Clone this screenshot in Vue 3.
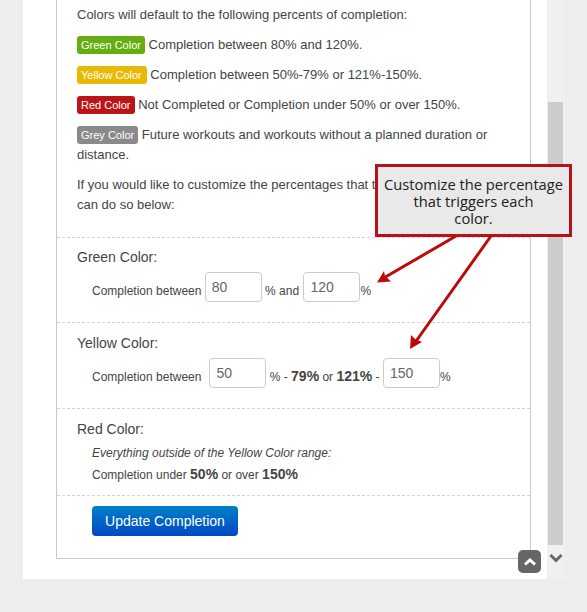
<template>
  <div class="page">
    <div class="panel">
      <div class="card">
        <div class="intro">
          <p>Colors will default to the following percents of completion:</p>
          <p v-for="item in legend" :key="item.label">
            <span class="badge" :class="item.cls">{{ item.label }}</span> {{ item.text }}
          </p>
          <p>If you would like to customize the percentages that trigger each color, you can do so below:</p>
        </div>

        <div class="section green">
          <h4>Green Color:</h4>
          <div class="fields">
            Completion between
            <input class="num" type="text" value="80">
            % and
            <input class="num second" type="text" value="120">%
          </div>
        </div>

        <div class="section yellow">
          <h4>Yellow Color:</h4>
          <div class="fields">
            <span class="lead">Completion between</span>
            <input class="num" type="text" value="50">
            % - <b>79%</b> or <b>121%</b> -
            <input class="num" type="text" value="150">%
          </div>
        </div>

        <div class="section red">
          <h4>Red Color:</h4>
          <div class="note">Everything outside of the Yellow Color range:</div>
          <div class="under">Completion under <b>50%</b> or over <b>150%</b></div>
        </div>

        <div class="actions">
          <button class="update" type="button">Update Completion</button>
        </div>
      </div>
    </div>

    <div class="scrollbar">
      <div class="thumb"></div>
      <svg class="down" width="14" height="10" viewBox="0 0 14 10">
        <path d="M1.5 2 L7 7.5 L12.5 2" fill="none" stroke="#666" stroke-width="3" />
      </svg>
    </div>

    <div class="to-top">
      <svg width="12" height="8" viewBox="0 0 12 8">
        <path d="M1 6.5 L6 2 L11 6.5" fill="none" stroke="#fff" stroke-width="3" />
      </svg>
    </div>

    <div class="callout">Customize the percentage<br>that triggers each<br>color.</div>

    <svg class="arrows" width="587" height="612" viewBox="0 0 587 612">
      <g fill="none" stroke="#bb0a0a" stroke-width="3">
        <path d="M456 236 L382 279" />
        <path d="M491 236 L414 344" />
      </g>
      <path d="M377 282.5 L384 271 L385 276 L391 281.5 Z" fill="#bb0a0a" />
      <path d="M410 349 L411 335 L415 339 L422 342 Z" fill="#bb0a0a" />
    </svg>
  </div>
</template>

<script setup>
const legend = [
  { label: 'Green Color', cls: 'b-green', text: 'Completion between 80% and 120%.' },
  { label: 'Yellow Color', cls: 'b-yellow', text: 'Completion between 50%-79% or 121%-150%.' },
  { label: 'Red Color', cls: 'b-red', text: 'Not Completed or Completion under 50% or over 150%.' },
  { label: 'Grey Color', cls: 'b-grey', text: 'Future workouts and workouts without a planned duration or distance.' }
];
</script>

<style>
html, body { margin: 0; background: #ededed; overflow: hidden; }
</style>

<style scoped>
.page {
  position: relative;
  display: flex;
  align-items: flex-start;
  width: 587px;
  height: 612px;
  overflow: hidden;
  background: #ededed;
  font-family: "Liberation Sans", Arial, sans-serif;
  font-size: 13px;
  color: #444;
}

.panel {
  box-sizing: border-box;
  width: 524px;
  height: 579px;
  margin-left: 23px;
  padding-left: 33px;
  background: #fff;
}

.card {
  box-sizing: border-box;
  width: 475px;
  height: 559px;
  border: 1px solid #c8c8c8;
  border-top: none;
}

.intro {
  box-sizing: border-box;
  height: 237px;
  padding: 5px 20px 0;
}

.intro p {
  margin: 0 0 10px;
  line-height: 20px;
}

.badge {
  display: inline-block;
  box-sizing: border-box;
  height: 18px;
  margin: -2px 0;
  padding: 0 4px;
  border-radius: 3px;
  font-size: 11px;
  line-height: 18px;
  color: #fff;
  vertical-align: 0;
}

.b-green { background: #66ad11; }
.b-yellow { background: #e8ba05; padding-right: 5px; }
.b-red { background: #bb1518; }
.b-grey { background: #8a8a8a; }

.section {
  box-sizing: border-box;
  height: 86px;
  padding: 11px 20px 0;
  border-top: 1px dashed #d4d4d4;
}

.green { height: 85px; padding-top: 10px; }

.section h4 {
  margin: 0;
  font-size: 14px;
  font-weight: normal;
  line-height: 18px;
}

.fields {
  margin: 6px 0 0 15px;
  font-size: 12px;
  line-height: 30px;
  white-space: nowrap;
}

.lead { margin-right: 8px; }

.fields b { font-size: 14px; }

.num {
  box-sizing: border-box;
  width: 57px;
  height: 30px;
  margin-bottom: 10px;
  padding: 0 6px;
  border: 1px solid #ccc;
  border-radius: 4px;
  font: 14px "Liberation Sans", Arial, sans-serif;
  color: #666;
  line-height: 20px;
  vertical-align: middle;
  outline: none;
}

.second { margin-left: 1px; }

.red { height: 87px; }

.note {
  margin: 6px 0 0 15px;
  font-size: 12px;
  font-style: italic;
  line-height: 18px;
}

.under {
  margin: 2px 0 0 15px;
  font-size: 12px;
  line-height: 20px;
}

.under b { font-size: 14px; }

.actions {
  padding: 10px 35px 0;
  border-top: 1px dashed #d4d4d4;
}

.update {
  display: block;
  width: 146px;
  height: 30px;
  padding: 0;
  border: none;
  border-radius: 4px;
  background: linear-gradient(#0080c8, #0048c4);
  font: 14px "Liberation Sans", Arial, sans-serif;
  color: #fff;
}

.scrollbar {
  display: flex;
  flex-direction: column;
  align-items: center;
  box-sizing: border-box;
  width: 18px;
  height: 579px;
  padding: 102px 2px 0 1px;
  background: #f0f0f0;
}

.thumb {
  width: 15px;
  height: 443px;
  background: #cccccc;
}

.down { margin-top: 8px; }

.to-top {
  position: absolute;
  left: 518px;
  top: 550px;
  display: flex;
  align-items: center;
  justify-content: center;
  width: 23px;
  height: 23px;
  border-radius: 5px;
  background: #666;
}

.callout {
  position: absolute;
  left: 375px;
  top: 164px;
  box-sizing: border-box;
  width: 197px;
  height: 73px;
  padding: 10px 0 0;
  border: 2px solid #b5121b;
  outline: 1px solid #b5121b;
  outline-offset: -3px;
  background: #e9e9e9;
  font-family: "Open Sans", sans-serif;
  font-size: 14.7px;
  line-height: 17px;
  text-align: center;
  color: #222;
}

.arrows {
  position: absolute;
  left: 0;
  top: 0;
  pointer-events: none;
}
</style>
